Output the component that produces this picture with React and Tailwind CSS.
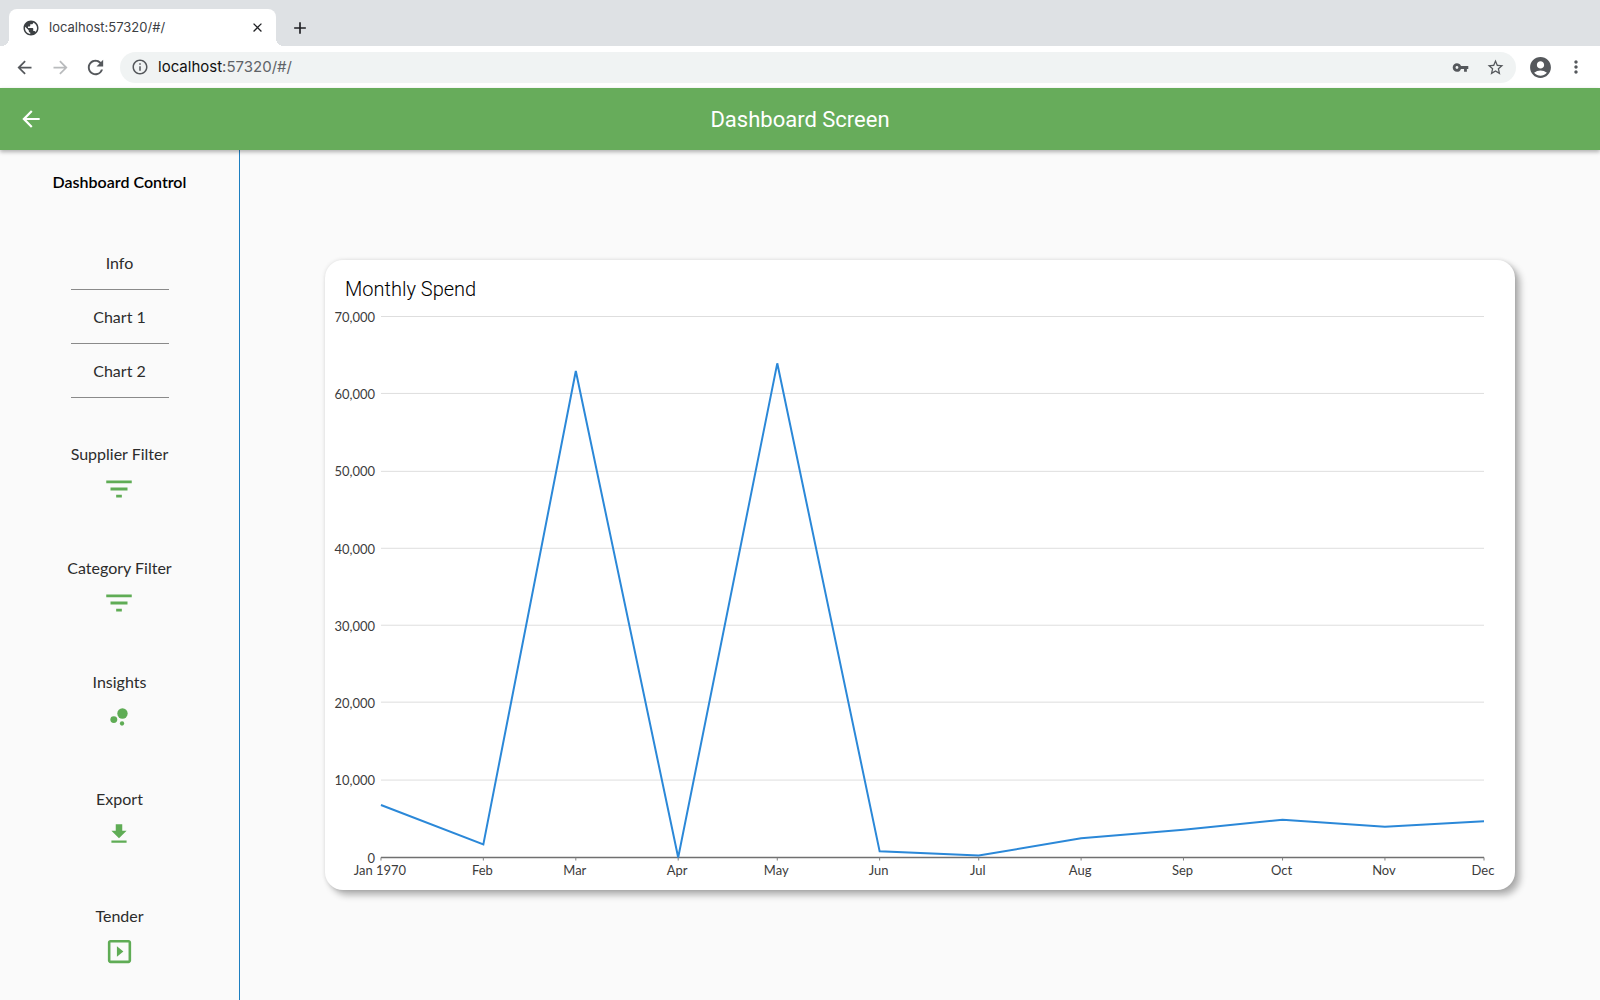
import React from 'react';
import {
  MdAccountCircle,
  MdArrowBack,
  MdArrowForward,
  MdBubbleChart,
  MdClose,
  MdFileDownload,
  MdFilterList,
  MdInfoOutline,
  MdAdd,
  MdMoreVert,
  MdOutlineSlideshow,
  MdPublic,
  MdRefresh,
  MdStarBorder,
  MdVpnKey,
} from 'react-icons/md';

const NAV_LINKS = ['Info', 'Chart 1', 'Chart 2'];

const ACTIONS = [
  { label: 'Supplier Filter', icon: MdFilterList, size: 34, height: 'h-[114px]' },
  { label: 'Category Filter', icon: MdFilterList, size: 34, height: 'h-[114px]' },
  { label: 'Insights', icon: MdBubbleChart, size: 26, height: 'h-[117px]' },
  { label: 'Export', icon: MdFileDownload, size: 26, height: 'h-[117px]' },
  { label: 'Tender', icon: MdOutlineSlideshow, size: 31, height: 'h-[117px]' },
];

// day = day of the year on which the month starts
const SPEND = [
  { month: 'Jan 1970', day: 0, value: 6800 },
  { month: 'Feb', day: 31, value: 1700 },
  { month: 'Mar', day: 59, value: 63000 },
  { month: 'Apr', day: 90, value: 0 },
  { month: 'May', day: 120, value: 64000 },
  { month: 'Jun', day: 151, value: 800 },
  { month: 'Jul', day: 181, value: 250 },
  { month: 'Aug', day: 212, value: 2500 },
  { month: 'Sep', day: 243, value: 3600 },
  { month: 'Oct', day: 273, value: 4900 },
  { month: 'Nov', day: 304, value: 4000 },
  { month: 'Dec', day: 334, value: 4700 },
];

const Y_TICKS = [0, 10000, 20000, 30000, 40000, 50000, 60000, 70000];

const PLOT = { left: 56, right: 1160, top: 12, bottom: 553 };

const xAt = (day) => PLOT.left + (day / 334) * (PLOT.right - PLOT.left);
const yAt = (value) => PLOT.bottom - (value / 70000) * (PLOT.bottom - PLOT.top);

function SpendChart() {
  const points = SPEND.map((d) => `${xAt(d.day)},${yAt(d.value)}`).join(' ');

  return (
    <svg
      viewBox="0 0 1191 585"
      role="img"
      aria-label="Monthly spend line chart"
      className="block h-auto w-full font-['Lato',sans-serif] text-[13px]"
    >
      {Y_TICKS.map((tick) => (
        <g key={tick}>
          {tick > 0 && (
            <line
              x1={PLOT.left}
              x2={PLOT.right}
              y1={Math.round(yAt(tick)) - 0.5}
              y2={Math.round(yAt(tick)) - 0.5}
              stroke="#dedede"
              strokeWidth="1"
            />
          )}
          <text x={PLOT.left - 6} y={yAt(tick) + 5} textAnchor="end" fill="#3c3c3c">
            {tick.toLocaleString('en-US')}
          </text>
        </g>
      ))}

      <line
        x1={PLOT.left}
        x2={PLOT.right}
        y1={PLOT.bottom}
        y2={PLOT.bottom}
        stroke="#707070"
        strokeWidth="1.4"
      />
      {SPEND.map((d) => (
        <g key={d.month}>
          <line
            x1={xAt(d.day)}
            x2={xAt(d.day)}
            y1={PLOT.bottom}
            y2={PLOT.bottom + 3}
            stroke="#808080"
            strokeWidth="1"
          />
          <text x={xAt(d.day) - 1} y={PLOT.bottom + 17} textAnchor="middle" fill="#3c3c3c">
            {d.month}
          </text>
        </g>
      ))}

      <polyline points={points} fill="none" stroke="#2b88d8" strokeWidth="2" />
    </svg>
  );
}

function BrowserChrome() {
  return (
    <div className="shrink-0 bg-[#dee1e4] font-['Inter',sans-serif]">
      <div className="flex h-[46px] items-end">
        <div className="relative ml-[9px] flex h-[37px] w-[267px] items-center rounded-t-lg bg-white pr-[11px] pl-[13px]">
          <span className="absolute bottom-0 -left-2 h-2 w-2 bg-[radial-gradient(circle_at_top_left,transparent_8px,white_8px)]" />
          <span className="absolute -right-2 bottom-0 h-2 w-2 bg-[radial-gradient(circle_at_top_right,transparent_8px,white_8px)]" />
          <MdPublic size={18} className="text-[#3c4043]" />
          <span className="ml-[9px] text-[13px] text-[#3c4043]">localhost:57320/#/</span>
          <button type="button" aria-label="Close tab" className="ml-auto text-[#202124]">
            <MdClose size={15} />
          </button>
        </div>
        <button type="button" aria-label="New tab" className="mb-2 ml-[14px] text-[#202124]">
          <MdAdd size={20} />
        </button>
      </div>

      <div className="flex h-[42px] items-center bg-white pr-[14px] pl-[14px] text-[#55585c]">
        <button type="button" aria-label="Back">
          <MdArrowBack size={21} />
        </button>
        <button type="button" aria-label="Forward" className="ml-[15px] text-[#b9bbbd]">
          <MdArrowForward size={21} />
        </button>
        <button type="button" aria-label="Reload" className="ml-[13px]">
          <MdRefresh size={23} />
        </button>
        <div className="ml-[13px] flex h-[31px] flex-1 items-center rounded-full bg-[#f0f3f3] pr-[11px] pl-[11px]">
          <MdInfoOutline size={18} />
          <span className="ml-[9px] text-[15px] text-[#5f6368]">
            <span className="text-[#111111]">localhost</span>:57320/#/
          </span>
          <button type="button" aria-label="Passwords" className="ml-auto">
            <MdVpnKey size={17} />
          </button>
          <button type="button" aria-label="Bookmark this page" className="ml-[17px]">
            <MdStarBorder size={19} />
          </button>
        </div>
        <button type="button" aria-label="Profile" className="ml-[12px]">
          <MdAccountCircle size={25} />
        </button>
        <button type="button" aria-label="Browser menu" className="ml-[13px]">
          <MdMoreVert size={20} />
        </button>
      </div>
    </div>
  );
}

function Sidebar() {
  return (
    <aside className="flex w-60 shrink-0 flex-col items-center border-r border-[#1c7ec0] font-['Lato',sans-serif] text-base text-[#2c2c2c]">
      <h2 className="mt-5 leading-6 font-semibold text-black">Dashboard Control</h2>

      <nav className="mt-[42px] flex w-[98px] flex-col">
        {NAV_LINKS.map((label) => (
          <a
            key={label}
            href={`#${label}`}
            className="flex h-[54px] items-center justify-center border-b border-[#8a8a8a]"
          >
            {label}
          </a>
        ))}
      </nav>

      <div className="mt-[44px] flex flex-col items-center">
        {ACTIONS.map(({ label, icon: Icon, size, height }) => (
          <div key={label} className={height}>
            <button type="button" className="flex flex-col items-center">
              <span className="leading-6">{label}</span>
              <span className="mt-[3px] flex h-10 items-center text-[#5fac55]">
                <Icon size={size} />
              </span>
            </button>
          </div>
        ))}
      </div>
    </aside>
  );
}

export default function App() {
  return (
    <div className="flex h-screen flex-col overflow-hidden bg-[#fafafa]">
      <BrowserChrome />

      <header className="z-10 grid h-[62px] shrink-0 grid-cols-[1fr_auto_1fr] items-center bg-[#67ac5b] px-[18px] text-white shadow-[0_2px_4px_rgba(0,0,0,0.3)]">
        <button type="button" aria-label="Go back" className="justify-self-start">
          <MdArrowBack size={26} />
        </button>
        <h1 className="font-['Roboto',sans-serif] text-[22px]">Dashboard Screen</h1>
      </header>

      <div className="flex min-h-0 flex-1">
        <Sidebar />
        <main className="flex min-w-0 flex-1 items-center px-[85px]">
          <section className="w-full rounded-[18px] bg-white shadow-[5px_5px_7px_rgba(0,0,0,0.3),0_0_4px_rgba(0,0,0,0.12)]">
            <h2 className="px-5 pt-[15px] pb-[2px] font-['Roboto',sans-serif] text-xl leading-7 font-light text-black">
              Monthly Spend
            </h2>
            <SpendChart />
          </section>
        </main>
      </div>
    </div>
  );
}
